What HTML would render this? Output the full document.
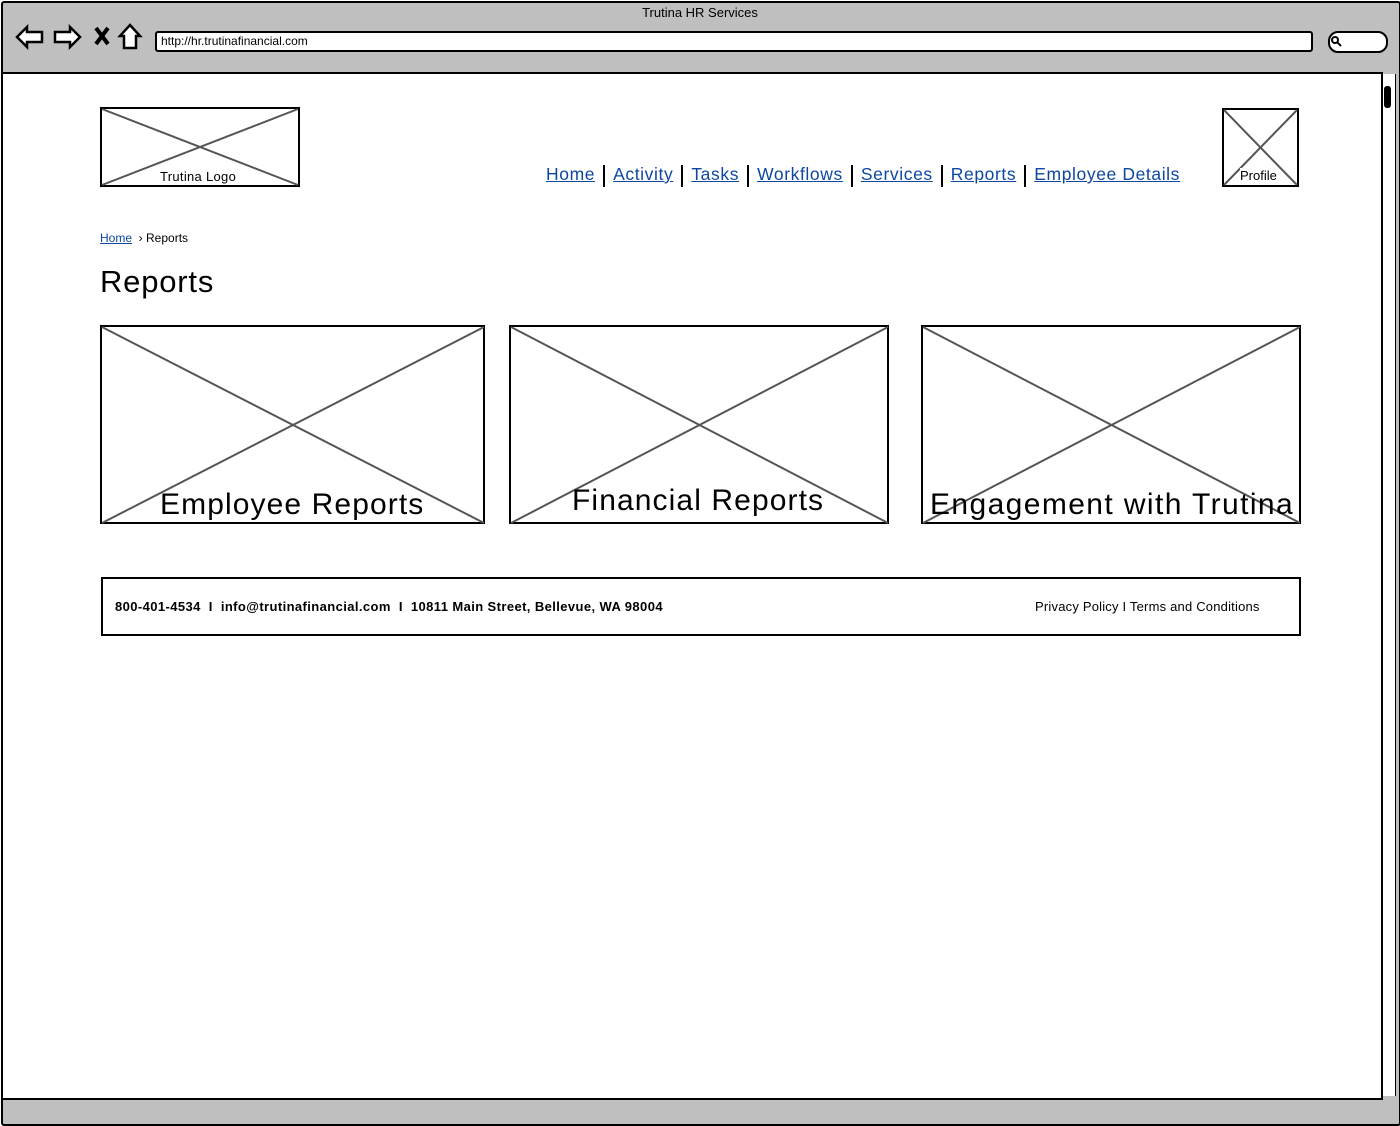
<!DOCTYPE html>
<html><head><style>
body{margin:0;width:1400px;height:1125px;position:relative;background:#fff;font-family:"Liberation Sans",sans-serif;overflow:hidden}
.a{position:absolute}
.nav a{color:#0d47a1;text-decoration:underline;font-size:17.5px;letter-spacing:0.6px}
.nav span{display:inline-block;width:2px;height:22px;background:#000;margin:0 8px;vertical-align:middle}
.big{font-size:30px;letter-spacing:1.1px}
</style></head><body>
<div class="a" style="left:1px;top:1px;width:1396px;height:1121px;border:2px solid #000;border-radius:3px;background:#bfbfbf"></div>
<div class="a" style="left:3px;top:72px;width:1378px;height:1024px;background:#fff;border-top:2px solid #000;border-bottom:2px solid #000;border-right:2px solid #000"></div>
<div class="a" style="left:1383px;top:74px;width:12px;height:1022px;background:#fff;border-right:1px solid #000"></div>
<div class="a" style="left:1384px;top:86px;width:7px;height:22px;background:#000;border-radius:3px"></div>
<div class="a" style="left:0;top:5px;width:1400px;text-align:center;font-size:13px">Trutina HR Services</div>
<svg class="a" style="left:14px;top:22px" width="130" height="30" fill="#fff" stroke="#000" stroke-width="2.5">
<path d="M3 15 L13 5 V10 H28 V20 H13 V25 Z"/><path d="M66 15 L56 5 V10 H41 V20 H56 V25 Z"/>
<path d="M82 6 L94 22 M94 6 L82 22" stroke-width="4"/><path d="M106 14 L116 3 L126 14 H122 V26 H110 V14 Z"/></svg>
<div class="a" style="left:155px;top:31px;width:1150px;height:17px;border:2px solid #000;border-radius:3px;background:#fff;font-size:12px;line-height:17px;padding-left:4px">http://hr.trutinafinancial.com</div>
<div class="a" style="left:1328px;top:31px;width:56px;height:18px;border:2px solid #000;border-radius:10px;background:#fff"></div>
<svg class="a" style="left:1330px;top:35px" width="14" height="14" fill="none" stroke="#000" stroke-width="2"><circle cx="5" cy="5" r="3"/><path d="M7 7 L11 11"/></svg>
<svg class="a" style="left:100px;top:107px" width="200" height="80" stroke="#555" stroke-width="2" fill="none"><rect x="1" y="1" width="198" height="78" stroke="#000"/><path d="M2 2 L198 78 M198 2 L2 78"/></svg>
<div class="a" style="left:160px;top:169px;font-size:13px;letter-spacing:0.3px">Trutina Logo</div>
<svg class="a" style="left:1222px;top:108px" width="77" height="79" stroke="#555" stroke-width="2" fill="none"><rect x="1" y="1" width="75" height="77" stroke="#000"/><path d="M2 2 L75 77 M75 2 L2 77"/></svg>
<div class="a" style="left:1240px;top:168px;font-size:13px;background:#fff">Profile</div>
<div class="a nav" style="left:546px;top:164px"><a>Home</a><span></span><a>Activity</a><span></span><a>Tasks</a><span></span><a>Workflows</a><span></span><a>Services</a><span></span><a>Reports</a><span></span><a>Employee Details</a></div>
<div class="a" style="left:100px;top:231px;font-size:12px"><a style="color:#0d47a1;text-decoration:underline">Home</a> &nbsp;›&nbsp;Reports</div>
<div class="a" style="left:100px;top:264px;font-size:31px;letter-spacing:0.8px">Reports</div>
<svg class="a" style="left:100px;top:325px" width="1202" height="200" stroke="#555" stroke-width="2" fill="none">
<rect x="1" y="1" width="383" height="197" stroke="#000"/><path d="M2 2 L384 198 M384 2 L2 198"/>
<rect x="410" y="1" width="378" height="197" stroke="#000"/><path d="M411 2 L788 198 M788 2 L411 198"/>
<rect x="822" y="1" width="378" height="197" stroke="#000"/><path d="M823 2 L1200 198 M1200 2 L823 198"/></svg>
<div class="a big" style="left:160px;top:488px">Employee Reports</div>
<div class="a big" style="left:572px;top:484px">Financial Reports</div>
<div class="a big" style="left:930px;top:488px;letter-spacing:1.4px">Engagement with Trutina</div>
<div class="a" style="left:101px;top:577px;width:1196px;height:55px;border:2px solid #000"></div>
<div class="a" style="left:115px;top:599px;font-size:13px;font-weight:bold;letter-spacing:0.4px">800-401-4534 &nbsp;I&nbsp; info@trutinafinancial.com &nbsp;I&nbsp; 10811 Main Street, Bellevue, WA 98004</div>
<div class="a" style="left:1035px;top:599px;font-size:13px;letter-spacing:0.2px">Privacy Policy I Terms and Conditions</div>
</body></html>
